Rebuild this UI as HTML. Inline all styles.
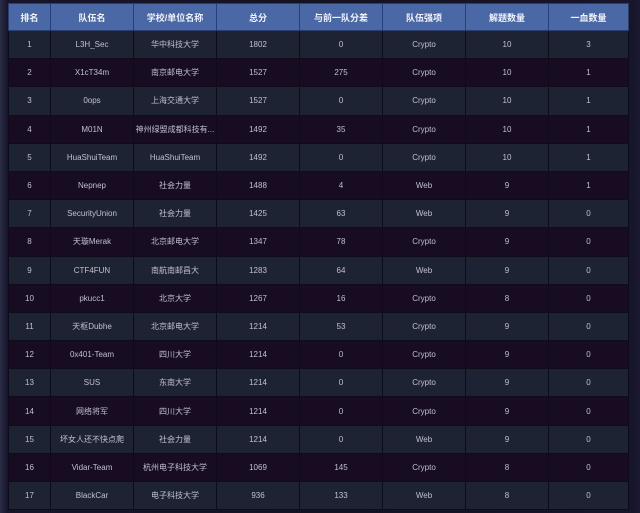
<!DOCTYPE html>
<html><head><meta charset="utf-8"><style>
html,body{margin:0;padding:0;width:640px;height:513px;overflow:hidden;background:#141324;font-family:"Liberation Sans","Noto Sans CJK SC",sans-serif;}
body{background:linear-gradient(90deg,#2a2c48 0,#16152a 8px,#141324 50%,#16152a 632px,#1a1930 640px);}
table{position:absolute;left:8px;top:3px;width:620px;border-collapse:collapse;table-layout:fixed;}
td,th{text-align:center;border:1px solid #0d0c18;padding:0;white-space:nowrap;overflow:hidden;}
th{background:#4b68a6;color:#f2f4fa;font-size:9px;font-weight:bold;height:26px;border-color:#2c3e70;}
td{height:27.2px;font-size:8px;color:#bfc1cc;}
tr:nth-child(odd) td{background:#1e2334;}
tr:nth-child(even) td{background:#170c22;}
</style></head><body>
<table>
<colgroup><col style="width:42px"><col style="width:83px"><col style="width:83px"><col style="width:83px"><col style="width:83px"><col style="width:83px"><col style="width:83px"><col style="width:80px"></colgroup>
<thead><tr><th>排名</th><th>队伍名</th><th>学校/单位名称</th><th>总分</th><th>与前一队分差</th><th>队伍强项</th><th>解题数量</th><th>一血数量</th></tr></thead>
<tbody>
<tr><td>1</td><td>L3H_Sec</td><td>华中科技大学</td><td>1802</td><td>0</td><td>Crypto</td><td>10</td><td>3</td></tr>
<tr><td>2</td><td>X1cT34m</td><td>南京邮电大学</td><td>1527</td><td>275</td><td>Crypto</td><td>10</td><td>1</td></tr>
<tr><td>3</td><td>0ops</td><td>上海交通大学</td><td>1527</td><td>0</td><td>Crypto</td><td>10</td><td>1</td></tr>
<tr><td>4</td><td>M01N</td><td>神州绿盟成都科技有...</td><td>1492</td><td>35</td><td>Crypto</td><td>10</td><td>1</td></tr>
<tr><td>5</td><td>HuaShuiTeam</td><td>HuaShuiTeam</td><td>1492</td><td>0</td><td>Crypto</td><td>10</td><td>1</td></tr>
<tr><td>6</td><td>Nepnep</td><td>社会力量</td><td>1488</td><td>4</td><td>Web</td><td>9</td><td>1</td></tr>
<tr><td>7</td><td>SecurityUnion</td><td>社会力量</td><td>1425</td><td>63</td><td>Web</td><td>9</td><td>0</td></tr>
<tr><td>8</td><td>天璇Merak</td><td>北京邮电大学</td><td>1347</td><td>78</td><td>Crypto</td><td>9</td><td>0</td></tr>
<tr><td>9</td><td>CTF4FUN</td><td>南航南邮昌大</td><td>1283</td><td>64</td><td>Web</td><td>9</td><td>0</td></tr>
<tr><td>10</td><td>pkucc1</td><td>北京大学</td><td>1267</td><td>16</td><td>Crypto</td><td>8</td><td>0</td></tr>
<tr><td>11</td><td>天枢Dubhe</td><td>北京邮电大学</td><td>1214</td><td>53</td><td>Crypto</td><td>9</td><td>0</td></tr>
<tr><td>12</td><td>0x401-Team</td><td>四川大学</td><td>1214</td><td>0</td><td>Crypto</td><td>9</td><td>0</td></tr>
<tr><td>13</td><td>SUS</td><td>东南大学</td><td>1214</td><td>0</td><td>Crypto</td><td>9</td><td>0</td></tr>
<tr><td>14</td><td>网络将军</td><td>四川大学</td><td>1214</td><td>0</td><td>Crypto</td><td>9</td><td>0</td></tr>
<tr><td>15</td><td>坏女人还不快点爬</td><td>社会力量</td><td>1214</td><td>0</td><td>Web</td><td>9</td><td>0</td></tr>
<tr><td>16</td><td>Vidar-Team</td><td>杭州电子科技大学</td><td>1069</td><td>145</td><td>Crypto</td><td>8</td><td>0</td></tr>
<tr><td>17</td><td>BlackCar</td><td>电子科技大学</td><td>936</td><td>133</td><td>Web</td><td>8</td><td>0</td></tr>
</tbody></table>
</body></html>
